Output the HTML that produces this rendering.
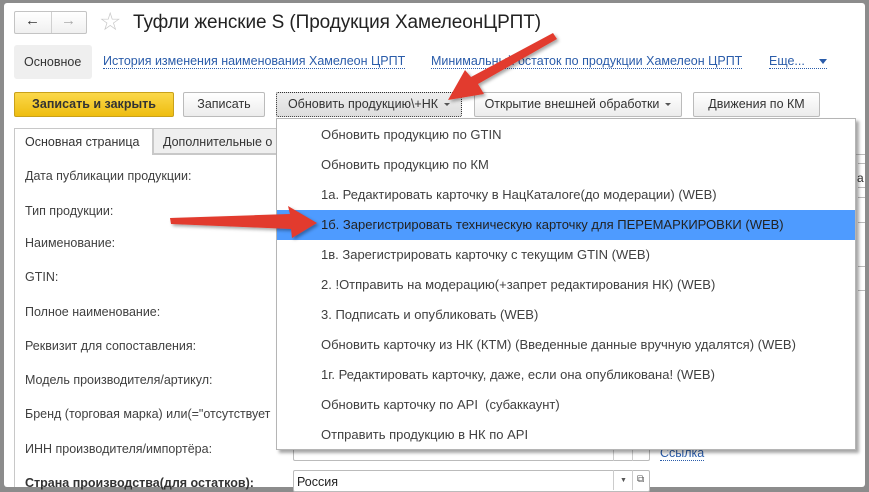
<!DOCTYPE html>
<html><head><meta charset="utf-8"><style>
*{box-sizing:border-box;margin:0;padding:0}
body{width:869px;height:491px;overflow:hidden;background:#8c8c8c;font-family:"Liberation Sans",Arial,sans-serif;font-size:12px;color:#333;position:relative}
.win{position:absolute;left:4px;top:3px;width:861px;height:484px;background:#fff;border-radius:3px}
.a{position:absolute;white-space:nowrap}
.btn{position:absolute;height:25px;border:1px solid #bbb;border-radius:2px;background:linear-gradient(#fff,#ececec);text-align:center;line-height:23px;font-size:12.5px;color:#333}
.lnk{color:#2a5caa;border-bottom:1px dotted #2a5caa;font-size:12.5px}
.lbl{position:absolute;left:25px;font-size:12.5px;color:#404040}
.dd{position:absolute;left:276px;top:118px;width:580px;height:332px;background:#fff;border:1px solid #b5b5b5;box-shadow:3px 3px 3px rgba(0,0,0,.35)}
.it{height:30px;line-height:30px;padding-left:44px;font-size:13px;color:#404040}
.hl{background:#4e9bff;color:#222}
.tri{display:inline-block;width:0;height:0;border-left:3px solid transparent;border-right:3px solid transparent;border-top:3px solid #555;vertical-align:middle;margin-left:6px}
</style></head><body>
<div class="win"></div>
<div class="a" style="left:14px;top:11px;width:73px;height:23px;border:1px solid #c4c4c4;border-radius:2px;background:linear-gradient(#fff,#f0f0f0)"></div>
<div class="a" style="left:51px;top:12px;width:1px;height:21px;background:#d0d0d0"></div>
<div class="a" style="left:25px;top:12px;font-size:15px;color:#333">&#x2190;</div>
<div class="a" style="left:61px;top:12px;font-size:15px;color:#aaa">&#x2192;</div>
<div class="a" style="left:99px;top:7px;font-size:25px;color:#c8c8c8">&#x2606;</div>
<div class="a" style="left:133px;top:12px;font-size:19px;color:#222;letter-spacing:-0.1px">Туфли женские S (Продукция ХамелеонЦРПТ)</div>
<div class="a" style="left:14px;top:45px;width:78px;height:34px;background:#efefef;border-radius:3px"></div>
<div class="a" style="left:24px;top:55px;font-size:12.5px;color:#333">Основное</div>
<div class="a lnk" style="left:103px;top:54px">История изменения наименования Хамелеон ЦРПТ</div>
<div class="a lnk" style="left:431px;top:54px">Минимальный остаток по продукции Хамелеон ЦРПТ</div>
<div class="a lnk" style="left:769px;top:54px">Еще...&nbsp;&nbsp;&nbsp;&nbsp;<span style="display:inline-block;border-left:4px solid transparent;border-right:4px solid transparent;border-top:5px solid #2a5caa;vertical-align:middle"></span></div>
<div class="btn" style="left:14px;top:92px;width:160px;background:linear-gradient(#fbd84a,#eebd10);border-color:#c9a11a;font-weight:bold;color:#333">Записать и закрыть</div>
<div class="btn" style="left:183px;top:92px;width:82px">Записать</div>
<div class="btn" style="left:276px;top:92px;width:186px;border:1px dotted #333;background:linear-gradient(#eee,#ddd)">Обновить продукцию\+НК<span class="tri"></span></div>
<div class="btn" style="left:474px;top:92px;width:208px">Открытие внешней обработки<span class="tri"></span></div>
<div class="btn" style="left:693px;top:92px;width:127px">Движения по КМ</div>
<div class="a" style="left:14px;top:128px;width:139px;height:27px;border:1px solid #c8c8c8;border-bottom:none;background:#fff"></div>
<div class="a" style="left:25px;top:135px;font-size:12.5px;color:#333">Основная страница</div>
<div class="a" style="left:153px;top:128px;width:130px;height:26px;border:1px solid #c8c8c8;background:#efefef;overflow:hidden"><span style="position:absolute;left:9px;top:6px;font-size:12.5px;color:#333">Дополнительные о</span></div>
<div class="a" style="left:14px;top:154px;width:1px;height:333px;background:#c8c8c8"></div>
<div class="a" style="left:153px;top:154px;width:712px;height:1px;background:#c8c8c8"></div>
<div class="lbl" style="top:169px">Дата публикации продукции:</div>
<div class="lbl" style="top:204px">Тип продукции:</div>
<div class="lbl" style="top:236px">Наименование:</div>
<div class="lbl" style="top:270px">GTIN:</div>
<div class="lbl" style="top:305px">Полное наименование:</div>
<div class="lbl" style="top:339px">Реквизит для сопоставления:</div>
<div class="lbl" style="top:373px">Модель производителя/артикул:</div>
<div class="lbl" style="top:407px">Бренд (торговая марка) или(="отсутствует</div>
<div class="lbl" style="top:442px">ИНН производителя/импортёра:</div>
<div class="lbl" style="top:476px;font-weight:bold;color:#333">Страна производства(для остатков):</div>
<div class="a" style="left:858px;top:154px;width:7px;height:1px;background:#bbb"></div>
<div class="a" style="left:858px;top:163px;width:7px;height:1px;background:#bbb"></div>
<div class="a" style="left:857px;top:171px;font-size:12px">а</div>
<div class="a" style="left:858px;top:187px;width:7px;height:1px;background:#bbb"></div>
<div class="a" style="left:858px;top:197px;width:7px;height:1px;background:#bbb"></div>
<div class="a" style="left:858px;top:222px;width:7px;height:1px;background:#bbb"></div>
<div class="a" style="left:858px;top:266px;width:7px;height:1px;background:#bbb"></div>
<div class="a" style="left:858px;top:290px;width:7px;height:1px;background:#bbb"></div>
<div class="a" style="left:293px;top:440px;width:357px;height:21px;border:1px solid #bbb;border-radius:2px"></div>
<div class="a" style="left:613px;top:440px;width:1px;height:21px;background:#ccc"></div>
<div class="a" style="left:632px;top:440px;width:1px;height:21px;background:#ccc"></div>
<div class="a lnk" style="left:660px;top:446px">Ссылка</div>
<div class="a" style="left:293px;top:470px;width:357px;height:22px;border:1px solid #bbb;border-radius:2px;background:#fff"></div>
<div class="a" style="left:613px;top:470px;width:1px;height:20px;background:#ccc"></div>
<div class="a" style="left:632px;top:470px;width:1px;height:20px;background:#ccc"></div>
<div class="a" style="left:297px;top:475px;font-size:12.5px;color:#222">Россия</div>
<div class="a" style="left:620px;top:477px;font-size:7px;color:#555">▼</div>
<div class="a" style="left:637px;top:474px;font-size:10px;color:#555">⧉</div>
<div class="dd"><div style="height:1px"></div>
<div class="it">Обновить продукцию по GTIN</div>
<div class="it">Обновить продукцию по КМ</div>
<div class="it">1а. Редактировать карточку в НацКаталоге(до модерации) (WEB)</div>
<div class="it hl">1б. Зарегистрировать техническую карточку для ПЕРЕМАРКИРОВКИ (WEB)</div>
<div class="it">1в. Зарегистрировать карточку с текущим GTIN (WEB)</div>
<div class="it">2. !Отправить на модерацию(+запрет редактирования НК) (WEB)</div>
<div class="it">3. Подписать и опубликовать (WEB)</div>
<div class="it">Обновить карточку из НК (КТМ) (Введенные данные вручную удалятся) (WEB)</div>
<div class="it">1г. Редактировать карточку, даже, если она опубликована! (WEB)</div>
<div class="it">Обновить карточку по API&nbsp; (субаккаунт)</div>
<div class="it">Отправить продукцию в НК по API</div>
</div>
<svg class="a" style="left:0;top:0" width="869" height="491">
<defs><filter id="s"><feDropShadow dx="2" dy="2" stdDeviation="1.5" flood-opacity=".35"/></filter></defs>
<g fill="#e23a2e" filter="url(#s)">
<polygon points="553,33 557,39 478,84 484,94 448,100 465,70 471,77"/>
<polygon points="170,218 290,214 288,206 317,223 292,238 291,229 171,224"/>
</g></svg>
</body></html>
